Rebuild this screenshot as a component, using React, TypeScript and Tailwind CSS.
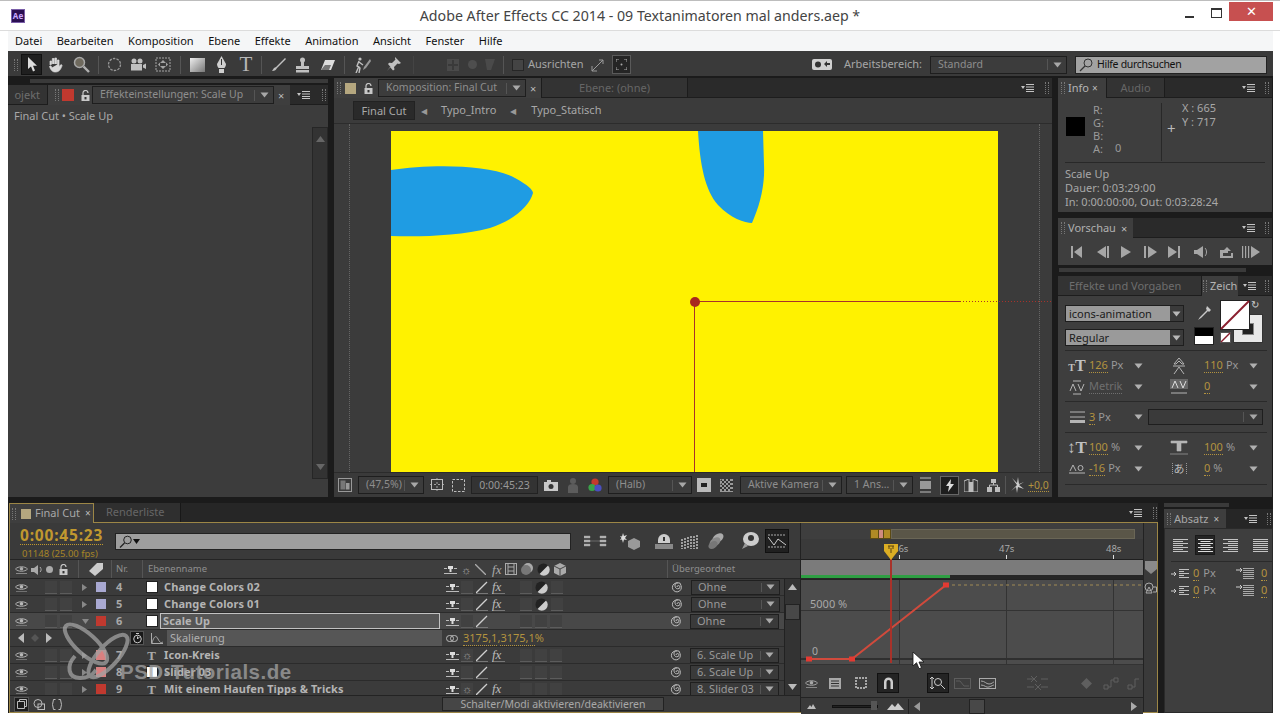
import React from "react";

type SP = { w: number; h: number; vb?: string; cls?: string; children?: React.ReactNode };
const Svg = ({ w, h, vb, cls, children }: SP) => (
  <svg width={w} height={h} viewBox={vb ?? `0 0 ${w} ${h}`} className={cls ?? "shrink-0"}>
    {children}
  </svg>
);

const Grip = () => <div className="w-[4px] h-[12px] shrink-0 border-x border-dotted border-[#777]" />;

const MenuIcon = () => (
  <Svg w={13} h={8}>
    <path d="M0 2h4L2 5z" fill="#c4c4c4" />
    <path d="M5 0.5h8M5 3h8M5 5.5h8M5 7.5h8" stroke="#c4c4c4" strokeWidth="1" />
  </Svg>
);

const Close = ({ cls }: { cls?: string }) => <span className={cls ?? "text-[11px] text-[#bbb] leading-none"}>×</span>;
const Down = ({ c }: { c?: string }) => (
  <Svg w={9} h={6}>
    <path d="M0.5 0.5h8L4.5 5.5z" fill={c ?? "#a8a8a8"} />
  </Svg>
);

const Lock = () => (
  <Svg w={9} h={11}>
    <path d="M2 5V3a2.5 2.5 0 0 1 5 0" stroke="#c8c8c8" strokeWidth="1.2" fill="none" />
    <rect x="0.5" y="5" width="8" height="6" fill="#c8c8c8" />
    <rect x="3.5" y="7" width="2" height="2.4" fill="#333" />
  </Svg>
);

const Eye = ({ c }: { c?: string }) => (
  <Svg w={13} h={9}>
    <path d="M0.5 4C3 1 10 1 12.5 4 10 7 3 7 0.5 4z" fill="none" stroke={c ?? "#b8b8b8"} strokeWidth="1" />
    <circle cx="6.5" cy="3.8" r="1.8" fill={c ?? "#b8b8b8"} />
    <path d="M1 8.5h11" stroke={c ?? "#8a8a8a"} strokeWidth="0.7" />
  </Svg>
);

const Dropdown = ({ text, w, cls }: { text: string; w: string; cls?: string }) => (
  <div className={`${w} ${cls ?? ""} h-[18px] flex items-center shrink-0 bg-[#3c3c3c] border border-[#1e1e1e] text-[10.5px] text-[#8e8e8e]`}>
    <span className="flex-1 pl-[7px] truncate">{text}</span>
    <span className="w-px h-[11px] bg-[#555]" />
    <span className="w-[18px] flex justify-center">
      <Down />
    </span>
  </div>
);

const Box = () => <div className="w-[12px] h-[13px] shrink-0 bg-[#414141] border-b border-[#5c5c5c]" />;

const Gold = ({ children }: { children: React.ReactNode }) => (
  <span className="text-[#b3933f] border-b border-dotted border-[#b3933f] leading-[12px]">{children}</span>
);

const fs = "font-['Noto_Sans',sans-serif]";

function TitleBar() {
  return (
    <div className="h-[31px] shrink-0 flex items-stretch bg-white border-t border-t-[#bdbdbd] border-b border-b-[#dcdcdc]">
      <div className="w-[150px] pl-[11px] pt-[8px]">
        <div className="w-[14px] h-[14px] bg-[#2a0f52] border border-[#7a5ea8] flex items-center justify-center text-[8px] leading-none text-[#c9a8ff] font-bold">
          Ae
        </div>
      </div>
      <div className="flex-1 text-center text-[#444] text-[14.2px] leading-[29px] whitespace-nowrap">
        Adobe After Effects CC 2014 - 09 Textanimatoren mal anders.aep *
      </div>
      <div className="w-[150px] flex justify-end items-start pr-[7px]">
        <div className="w-[9px] h-[2px] bg-[#333] mt-[15px] mr-[17px]" />
        <div className="w-[11px] h-[10px] border border-[#333] border-t-2 mt-[7px] mr-[7px]" />
        <div className="w-[44px] h-[19px] bg-[#c75050] text-white text-center text-[13px] leading-[18px] mt-[1px]">✕</div>
      </div>
    </div>
  );
}

function MenuBar() {
  const items = ["Datei", "Bearbeiten", "Komposition", "Ebene", "Effekte", "Animation", "Ansicht", "Fenster", "Hilfe"];
  return (
    <div className="h-[20px] shrink-0 ml-[8px] mr-[7px] bg-[#f5f6f7] flex items-center gap-[14.5px] pl-[7px] text-[11px] text-[#111]">
      {items.map((t) => (
        <span key={t}>{t}</span>
      ))}
    </div>
  );
}

const Tool = ({ children, w, cls }: { children?: React.ReactNode; w?: string; cls?: string }) => (
  <div className={`${w ?? "w-[24px]"} ${cls ?? ""} h-[20px] shrink-0 flex items-center justify-center`}>{children}</div>
);
const Sep = ({ cls }: { cls?: string }) => <div className={`w-px h-[18px] bg-[#555] shrink-0 ${cls ?? ""}`} />;

function ToolBar() {
  const c = "#c0c0c0";
  return (
    <div className="h-[25px] shrink-0 bg-[#3a3a3a] flex items-center pl-[6px] pt-[2px] text-[11px]">
      <Grip />
      <div className="w-[21px] h-[21px] ml-[3px] bg-[#1f1f1f] border border-[#111] flex items-center justify-center">
        <Svg w={10} h={15}>
          <path d="M1 0v12l3-2.600 2 5 2-.8-2-4.800H10z" fill="#dcdcdc" />
        </Svg>
      </div>
      <Tool cls="ml-[1px]">
        <Svg w={16} h={16}>
          <path d="M3 8V4h1.600v3.500M5.300 7V1.500h1.700V7M7.800 7V1h1.700v6M10.300 7.500V3h1.700v6.500l2-2 1.200 1c-1 2-2 6.500-6.700 6.500-3 0-4.500-1.500-6-5.500l1.200-.8L5 10.500" fill="#d8d8d8" stroke="#d8d8d8" strokeWidth=".7" />
        </Svg>
      </Tool>
      <Tool cls="ml-[2px]">
        <Svg w={17} h={17}>
          <circle cx="6.500" cy="6.500" r="5" fill="#6f6a5e" stroke="#a8a8a8" strokeWidth="1.500" />
          <path d="M10.500 10.500l5.500 5.500" stroke="#b0b0b0" strokeWidth="2.400" />
        </Svg>
      </Tool>
      <Sep cls="ml-[5px]" />
      <Tool cls="ml-[3px]">
        <Svg w={15} h={15}>
          <circle cx="7.500" cy="7.500" r="6" fill="none" stroke="#999" strokeWidth="1.300" strokeDasharray="2.500 1.200" />
        </Svg>
      </Tool>
      <Tool>
        <Svg w={17} h={14}>
          <circle cx="4" cy="3" r="2.500" fill={c} />
          <circle cx="10" cy="3" r="2.500" fill={c} />
          <rect x="1" y="6" width="11" height="6.500" fill={c} />
          <path d="M13 7l3-1.500v5.500L13 9.500z" fill={c} />
        </Svg>
      </Tool>
      <Tool cls="ml-[1px]">
        <Svg w={16} h={15}>
          <rect x="1" y="1" width="14" height="13" fill="none" stroke="#a5a5a5" strokeDasharray="2 1" />
          <path d="M8 3l3 3H5zM8 12L5 9h6zM3 7.500l2-2v4zM13 7.500l-2-2v4z" fill="#a5a5a5" />
        </Svg>
      </Tool>
      <Sep cls="ml-[5px]" />
      <Tool cls="ml-[4px]">
        <Svg w={15} h={14}>
          <defs>
            <linearGradient id="rg" x1="0" y1="0" x2="1" y2="1">
              <stop offset="0" stopColor="#eee" />
              <stop offset="1" stopColor="#777" />
            </linearGradient>
          </defs>
          <rect width="15" height="14" fill="url(#rg)" />
        </Svg>
      </Tool>
      <Tool>
        <Svg w={11} h={18}>
          <path d="M5.500 0L10 8c0 2-1 3-1.500 4h-6C2 11 1 10 1 8z" fill="#d0d0d0" />
          <rect x="3" y="13" width="5" height="4" fill="#d0d0d0" />
          <path d="M5.500 3v6" stroke="#333" />
        </Svg>
      </Tool>
      <Tool cls="ml-[1px]">
        <span className="font-['Liberation_Serif',serif] text-[21px] leading-none text-[#b8b8b8]">T</span>
      </Tool>
      <Sep cls="ml-[3px]" />
      <Tool cls="ml-[4px]">
        <Svg w={15} h={15}>
          <path d="M14 1L5 10l-2 1-2 3c3 0 4-1 5-3l9-9z" fill={c} />
        </Svg>
      </Tool>
      <Tool>
        <Svg w={15} h={16}>
          <circle cx="7.500" cy="3" r="2.500" fill={c} />
          <rect x="6" y="5" width="3" height="4" fill={c} />
          <rect x="1" y="9" width="13" height="3" fill={c} />
          <rect x="1" y="13" width="13" height="2.500" fill={c} />
        </Svg>
      </Tool>
      <Tool cls="ml-[2px]">
        <Svg w={16} h={12}>
          <path d="M5 1h10L11 11H1z" fill="#ddd" />
          <path d="M1 11l4-5h6l-2 5z" fill="#777" />
        </Svg>
      </Tool>
      <Sep cls="ml-[4px]" />
      <Tool cls="ml-[5px]">
        <Svg w={17} h={16}>
          <circle cx="6" cy="2" r="1.600" fill={c} />
          <path d="M5 4l-2 5 3 2-1 5M5 5l4 3M5 9l-3 7" stroke={c} strokeWidth="1.400" fill="none" />
          <path d="M16 2L10 10l-1 3 3-2 5-7z" fill="#999" />
        </Svg>
      </Tool>
      <Tool cls="ml-[7px]">
        <Svg w={15} h={15}>
          <path d="M9 0l6 6-2 1-1.500-.5L8 10l.5 2.500-1.500 1L4 10l-3 4 3.500-4-2.500-3 1.200-1.200L6 6l3.500-3.500L9 1.500z" fill={c} />
        </Svg>
      </Tool>
      <Sep cls="ml-[8px] opacity-40" />
      <div className="flex items-center ml-[33px] gap-[8px] opacity-60">
        <Svg w={12} h={12}>
          <rect width="12" height="12" fill="#555" />
          <path d="M6 1v10M1 6h10" stroke="#3a3a3a" strokeWidth="2" />
        </Svg>
        <div className="w-[9px] h-[9px] rounded-full bg-[#5c5c5c] ml-[1px]" />
        <Svg w={10} h={11}>
          <path d="M0 0h10L6 11H2z" fill="#555" />
        </Svg>
      </div>
      <Sep cls="ml-[8px]" />
      <div className="w-[12px] h-[12px] ml-[8px] border border-[#262626] bg-[#444] shrink-0" />
      <span className="ml-[4px] text-[#a6a6a6]">Ausrichten</span>
      <Tool cls="ml-[6px]" w="w-[16px]">
        <Svg w={14} h={14}>
          <path d="M1 13L12 2M8 2h4v4M1 8v5h5" stroke="#9a9a9a" strokeWidth="1" fill="none" />
        </Svg>
      </Tool>
      <div className="ml-[6px] w-[19px] h-[19px] bg-[#252525] border border-[#5a5a5a] flex items-center justify-center shrink-0">
        <Svg w={11} h={11}>
          <path d="M0 3V0h3M8 0h3v3M11 8v3H8M3 11H0V8" stroke="#aaa" fill="none" />
          <circle cx="5.500" cy="5.500" r="1" fill="#aaa" />
        </Svg>
      </div>
      <div className="flex-1" />
      <Svg w={20} h={11}>
        <rect width="20" height="11" rx="2" fill="#d0d0d0" />
        <circle cx="6" cy="5.500" r="3" fill="#333" />
        <path d="M12 5l3-3v2h3v2h-3v2z" fill="#333" />
      </Svg>
      <span className="ml-[12px] text-[#a6a6a6] text-[11px]">Arbeitsbereich:</span>
      <Dropdown text="Standard" w="w-[137px] ml-[8px]" />
      <div className="ml-[8px] mr-[6px] w-[192px] h-[18px] flex items-center bg-[#a2a2a2] border border-[#222] text-[#111] shrink-0">
        <Svg w={14} h={14} cls="ml-[3px] shrink-0">
          <circle cx="9" cy="5" r="4" fill="none" stroke="#333" />
          <path d="M6 8l-5 5" stroke="#333" strokeWidth="1.300" />
        </Svg>
        <span className="ml-[4px] text-[10.5px] tracking-[-0.3px]">Hilfe durchsuchen</span>
      </div>
    </div>
  );
}

function EffectsPanel() {
  return (
    <div className="w-[320px] shrink-0 flex flex-col">
      <div className="h-[7px] shrink-0 pt-[1px] pl-[22px]">
        <div className="h-[4px] bg-[#3a3a3a]" />
      </div>
      <div className="h-[20px] shrink-0 flex items-stretch bg-[#2a2a2a] text-[11px] border-b border-[#1d1d1d]">
        <div className="w-[40px] bg-[#333] text-[#6e6e6e] leading-[19px] border-r border-[#1c1c1c] overflow-hidden text-right pr-[7px]">ojekt</div>
        <div className="w-[242px] bg-[#3e3e3e] flex items-center pl-[7px] -mb-px">
          <Grip />
          <div className="w-[12px] h-[12px] ml-[3px] bg-[#c0392f] shrink-0" />
          <div className="ml-[7px] w-[9px] flex"><Lock /></div>
          <Dropdown text="Effekteinstellungen: Scale Up" w="w-[182px] ml-[2px]" />
          <Close cls="ml-[4px] text-[11px] text-[#bbb] leading-none" />
        </div>
        <div className="flex-1 flex items-center justify-end pr-[2px] gap-[12px]">
          <MenuIcon />
          <Grip />
        </div>
      </div>
      <div className="flex-1 flex flex-col bg-[#3c3c3c] min-h-0">
        <div className="h-[22px] shrink-0 flex items-center pl-[6px] text-[11px] text-[#a8a8a8]">Final Cut • Scale Up</div>
        <div className="flex-1 flex justify-end min-h-0">
          <div className="w-[16px] bg-[#333] flex flex-col items-center justify-between py-[8px] border border-[#262626]">
            <Svg w={9} h={6}>
              <path d="M0 6h9L4.500 0z" fill="#666" />
            </Svg>
            <Svg w={9} h={6}>
              <path d="M0 0h9L4.500 6z" fill="#666" />
            </Svg>
          </div>
        </div>
        <div className="h-[18px] shrink-0" />
      </div>
    </div>
  );
}

function CompFooter() {
  const Mini = ({ children, cls }: { children: React.ReactNode; cls?: string }) => <div className={`shrink-0 flex items-center justify-center ${cls ?? ""}`}>{children}</div>;
  const c = "#bdbdbd";
  return (
    <div className="h-[25px] shrink-0 bg-[#3a3a3a] flex items-center pl-[4px] text-[11px] border-t border-[#2b2b2b]">
      <Mini>
        <Svg w={14} h={14}>
          <rect x=".5" y=".5" width="13" height="13" fill="none" stroke="#999" />
          <rect x="2.500" y="2.500" width="5" height="9" fill="#777" />
          <rect x="8" y="5" width="3.500" height="6.500" fill="#999" />
        </Svg>
      </Mini>
      <Dropdown text="(47,5%)" w="w-[66px] ml-[6px]" />
      <Mini cls="ml-[6px]">
        <Svg w={14} h={14}>
          <rect x="1.500" y="1.500" width="11" height="10" fill="none" stroke={c} />
          <path d="M7 0v13M0 6.500h14" stroke={c} strokeWidth=".8" strokeDasharray="2 2" />
        </Svg>
      </Mini>
      <Mini cls="ml-[8px]">
        <Svg w={13} h={13}>
          <rect x=".5" y=".5" width="12" height="12" fill="none" stroke={c} strokeDasharray="2.500 1.500" />
        </Svg>
      </Mini>
      <div className="ml-[6px] w-[67px] h-[18px] bg-[#333] border border-[#222] text-[#999] text-[10.5px] text-center leading-[16px] shrink-0">0:00:45:23</div>
      <Mini cls="ml-[6px]">
        <Svg w={14} h={11}>
          <rect y="2" width="14" height="9" fill="#c8c8c8" />
          <rect x="3" width="4" height="2" fill="#c8c8c8" />
          <circle cx="7" cy="6.500" r="2.500" fill="#333" />
        </Svg>
      </Mini>
      <Mini cls="ml-[10px]">
        <Svg w={10} h={15}>
          <circle cx="5" cy="3" r="3" fill="#5c5c5c" />
          <path d="M0 15V9c0-2 2-3 5-3s5 1 5 3v6z" fill="#5c5c5c" />
        </Svg>
      </Mini>
      <Mini cls="ml-[10px]">
        <Svg w={14} h={15}>
          <circle cx="7" cy="4" r="3.600" fill="#c43a2d" />
          <circle cx="4" cy="9.500" r="3.600" fill="#3aa14a" />
          <circle cx="10" cy="10" r="3.600" fill="#4a4fc0" />
        </Svg>
      </Mini>
      <Dropdown text="(Halb)" w="w-[84px] ml-[6px]" />
      <Mini cls="ml-[5px]">
        <Svg w={14} h={14}>
          <rect width="14" height="14" fill="#bbb" />
          <rect x="4" y="5" width="6" height="4" fill="#222" />
        </Svg>
      </Mini>
      <Mini cls="ml-[9px]">
        <Svg w={13} h={13}>
          <rect width="13" height="13" fill="#999" />
          <path d="M0 2h2V0M4 0v2h2V0M8 0v2h2V0M0 6h2V4M4 4v2h2V4M8 4v2h2V4M2 2h2v2H2zM6 2h2v2H6zM10 2h3v2h-3zM2 6h2v2H2zM6 6h2v2H6zM10 6h3v2h-3zM0 8h2v2H0zM4 8h2v2H4zM8 8h2v2H8zM2 10h2v2H2zM6 10h2v2H6zM10 10h3v2h-3z" fill="#333" />
        </Svg>
      </Mini>
      <Dropdown text="Aktive Kamera" w="w-[102px] ml-[7px]" />
      <Dropdown text="1 Ans..." w="w-[67px] ml-[4px]" />
      <Mini cls="ml-[7px]">
        <Svg w={11} h={16}>
          <path d="M0 1h11M0 15h11" stroke={c} />
          <rect y="4" width="11" height="8" fill="#999" />
        </Svg>
      </Mini>
      <div className="ml-[9px] w-[19px] h-[19px] bg-[#1e1e1e] border border-[#666] flex items-center justify-center shrink-0">
        <Svg w={8} h={13}>
          <path d="M5 0L0 7h3l-1 6 6-8H4.500z" fill="#ddd" />
        </Svg>
      </div>
      <Mini cls="ml-[5px]">
        <Svg w={14} h={13}>
          <path d="M0 2l5-2v13H0zM14 2L9 0v13h5z" fill="none" stroke={c} />
          <rect x="5" y="3" width="4" height="10" fill={c} />
        </Svg>
      </Mini>
      <Mini cls="ml-[9px]">
        <Svg w={13} h={13}>
          <rect x="4" width="5" height="4" fill={c} />
          <rect y="8" width="5" height="5" fill={c} />
          <rect x="8" y="8" width="5" height="5" fill={c} />
          <path d="M6.500 4v2M2.500 8V6h8v2" stroke={c} fill="none" />
        </Svg>
      </Mini>
      <Sep cls="ml-[5px]" />
      <Mini cls="ml-[4px]">
        <Svg w={14} h={16}>
          <path d="M7 8L2 1l5 5 1-6 1 7 5-2-5 3 5 4-6-2-1 6-1-6-5 4z" fill="#ccc" />
        </Svg>
      </Mini>
      <span className="ml-[4px] text-[10.5px] text-[#b3933f] border-b border-dotted border-[#b3933f] leading-[12px] whitespace-nowrap">+0,0</span>
    </div>
  );
}

function CompPanel() {
  return (
    <div className="w-[718px] shrink-0 flex flex-col bg-[#3b3b3b] ml-[6px]">
      <div className="h-[20px] flex items-stretch bg-[#2a2a2a] text-[11px] border-b border-[#1d1d1d]">
        <div className="w-[207px] bg-[#3e3e3e] flex items-center pl-[3px] -mb-px">
          <Grip />
          <div className="w-[11px] h-[11px] ml-[4px] bg-[#b5a77f] shrink-0" />
          <div className="ml-[8px] flex"><Lock /></div>
          <Dropdown text="Komposition: Final Cut" w="w-[148px] ml-[5px]" />
          <Close cls="ml-[4px] text-[11px] text-[#bbb] leading-none" />
        </div>
        <div className="w-[147px] bg-[#333] border-x border-[#1c1c1c] text-[#666] leading-[19px] text-center">Ebene: (ohne)</div>
        <div className="flex-1 flex items-center justify-end pr-[3px] gap-[11px]">
          <MenuIcon />
          <Grip />
        </div>
      </div>
      <div className="h-[25px] shrink-0 flex items-center pl-[19px] text-[11px] text-[#a8a8a8]">
        <div className="w-[62px] h-[19px] bg-[#2a2a2a] border border-[#222] text-center leading-[17px]">Final Cut</div>
        <span className="ml-[6px] text-[#999] text-[8px]">◀</span>
        <span className="ml-[14px]">Typo_Intro</span>
        <span className="ml-[14px] text-[#999] text-[8px]">◀</span>
        <span className="ml-[15px]">Typo_Statisch</span>
      </div>
      <div className="h-[349px] shrink-0 relative bg-[#3b3b3b] pl-[57px] pt-[7px] overflow-hidden border-t border-[#2c2c2c]">
        <div className="w-[607px] h-[342px] bg-[#fff200]" />
        <div className="absolute left-[15px] top-0 bottom-0 border-l border-dotted border-[#666]" />
        <div className="absolute right-[12px] top-0 bottom-0 border-l border-dotted border-[#666]" />
        <svg width="718" height="349" viewBox="334 123 718 349" className="absolute left-0 -top-px">
          <path d="M391 170C430 164 490 164 515 178 528 185 533 190 533 193 530 205 515 220 490 228 460 236 420 237 391 236Z" fill="#1f9ce3" />
          <path d="M698 131C700 165 705 190 718 205 730 218 745 223 752 223 760 205 765 185 764 165L763 131Z" fill="#1f9ce3" />
          <path d="M695 301.500H960" stroke="#a8322a" strokeWidth="1" />
          <path d="M960 301.500H1052" stroke="#a8322a" strokeWidth="1" strokeDasharray="1 2" />
          <path d="M694.500 302V472" stroke="#a8322a" strokeWidth="1" />
          <circle cx="695" cy="302" r="5" fill="#a8281f" />
        </svg>
      </div>
      <CompFooter />
    </div>
  );
}

const PanelHead = ({ children }: { children: React.ReactNode }) => (
  <div className="h-[20px] shrink-0 flex items-stretch bg-[#2a2a2a] text-[11px] border-b border-[#1d1d1d]">
    {children}
    <div className="flex-1 flex items-center justify-end pr-[3px] gap-[10px]">
      <MenuIcon />
      <Grip />
    </div>
  </div>
);

function InfoPanel() {
  return (
    <div className="h-[134px] shrink-0 flex flex-col bg-[#3e3e3e] text-[11px] text-[#a8a8a8]">
      <PanelHead>
        <div className="w-[48px] bg-[#3e3e3e] flex items-center pl-[3px] -mb-px">
          <Grip />
          <span className="ml-[3px] text-[#b5b5b5]">Info</span>
          <Close cls="ml-[3px] text-[10px] text-[#bbb]" />
        </div>
        <div className="w-[59px] bg-[#333] border-x border-[#1c1c1c] text-[#666] text-center leading-[19px]">Audio</div>
      </PanelHead>
      <div className="h-[59px] mt-[5px] flex shrink-0 leading-[13px]">
        <div className="w-[8px] shrink-0" />
        <div className="w-[19px] h-[19px] mt-[14px] bg-black shrink-0" />
        <div className="w-[30px] pl-[8px] text-[#9a9a9a] shrink-0">
          <div>R:</div>
          <div>G:</div>
          <div>B:</div>
          <div>A:</div>
        </div>
        <div className="w-[46px] pt-[38px] text-[#9a9a9a] shrink-0">0</div>
        <div className="w-px h-[58px] bg-[#282828] shrink-0" />
        <div className="ml-[5px] w-[14px] pt-[18px] text-[#bbb] text-[15px] leading-none shrink-0">+</div>
        <div className="text-[#a8a8a8] -mt-[2px] ml-[1px]">
          <div>X : 665</div>
          <div className="mt-[1px]">Y : 717</div>
        </div>
      </div>
      <div className="h-px mx-[7px] bg-[#282828]" />
      <div className="pl-[7px] pt-[4px] leading-[14px] text-[#a8a8a8] whitespace-nowrap">
        <div>Scale Up</div>
        <div>Dauer: 0:03:29:00</div>
        <div>In: 0:00:00:00, Out: 0:03:28:24</div>
      </div>
    </div>
  );
}

function PreviewPanel() {
  const f = "#a6a6a6";
  return (
    <div className="h-[47px] mt-[6px] shrink-0 flex flex-col bg-[#3e3e3e] text-[11px]">
      <PanelHead>
        <div className="w-[75px] bg-[#3e3e3e] flex items-center pl-[3px] -mb-px">
          <Grip />
          <span className="ml-[3px] text-[#b0b0b0]">Vorschau</span>
          <Close cls="ml-[5px] text-[11px] text-[#bbb] leading-none" />
        </div>
      </PanelHead>
      <div className="flex-1 flex items-center pl-[12px]">
        <Svg w={202} h={14}>
          <path d="M1 1h2v12H1zM12 1v12L4 7z" fill={f} />
          <path d="M27 7l9-6v12zM37 1h2v12h-2z" fill={f} />
          <path d="M51 1l10 6-10 6z" fill={f} />
          <path d="M74 1h2v12h-2zM78 1l9 6-9 6z" fill={f} />
          <path d="M98 1l9 6-9 6zM108 1h2v12h-2z" fill={f} />
          <path d="M124 5h3l6-4v12l-6-4h-3z" fill={f} />
          <path d="M135 3c2 2 2 6 0 8" stroke={f} fill="none" />
          <path d="M150 5h4l3-3 4 4h-3v2h-8zM150 8h3v3h8V8h2v5h-13z" fill={f} />
          <path d="M172 1h1.200v12H172zM175 1h1.200v12H175zM178 1h1.200v12H178zM181 1l9 6-9 6z" fill={f} />
        </Svg>
      </div>
    </div>
  );
}

function CharPanel() {
  const Row = ({ icon, val, unit, muted, second }: { icon: React.ReactNode; val: string; unit?: string; muted?: boolean; second?: boolean }) => (
    <div className="flex items-center h-[21px]">
      <div className="w-[24px] flex justify-center shrink-0">{icon}</div>
      <span className={`${second ? "ml-[13px]" : "ml-0"} w-[45px] shrink-0 whitespace-nowrap`}>
        {muted ? <span className="text-[#6f6f6f] border-b border-dotted border-[#6f6f6f] leading-[12px]">{val}</span> : <Gold>{val}</Gold>}
        {unit ? <span className="ml-[3px] text-[#999]">{unit}</span> : null}
      </span>
      <Down c="#b0b0b0" />
    </div>
  );
  const g = "#b5b5b5";
  return (
    <div className="flex-1 flex flex-col bg-[#3e3e3e] text-[11px] mt-[4px] min-h-0">
      <div className="h-[20px] shrink-0 flex items-stretch bg-[#2a2a2a] border-b border-[#1d1d1d]">
        <div className="w-[144px] bg-[#333] border-r border-[#1c1c1c] text-[#6e6e6e] pl-[11px] leading-[19px] whitespace-nowrap">Effekte und Vorgaben</div>
        <div className="w-[36px] bg-[#3e3e3e] flex items-center pl-[1px] -mb-px overflow-hidden">
          <Grip />
          <span className="ml-[3px] text-[#b5b5b5]">Zeich</span>
        </div>
        <div className="flex-1 flex items-center justify-end pr-[3px] gap-[9px]">
          <MenuIcon />
          <Grip />
        </div>
      </div>
      <div className="flex-1 pl-[7px] pr-[5px] pt-[9px] min-h-0 overflow-hidden">
        <div className="flex items-start h-[47px]">
          <div className="w-[119px] flex flex-col gap-[7px]">
            {["icons-animation", "Regular"].map((t) => (
              <div key={t} className="h-[17px] flex border border-[#1e1e1e] bg-[#3a3a3a]">
                <div className="w-[104px] bg-[#9a9a9a] text-[#1a1a1a] pl-[3px] leading-[15px]">{t}</div>
                <div className="flex-1 flex items-center justify-center"><Down c="#b8b8b8" /></div>
              </div>
            ))}
          </div>
          <div className="ml-[10px] w-[20px] flex flex-col items-center">
            <Svg w={15} h={16}>
              <path d="M10 1l4 4-2 2-1-1-7 7-3 2 2-3 7-7-1-1z" fill="#c8c8c8" />
            </Svg>
            <div className="w-[20px] h-[18px] mt-[6px] border border-[#222] bg-white flex flex-col">
              <div className="h-[8px] bg-black" />
            </div>
          </div>
          <div className="ml-[6px] relative w-[46px] h-[44px] -mt-[5px]">
            <div className="absolute left-[13px] top-[14px] w-[30px] h-[29px] bg-[#e8e8e8] border border-[#333] flex items-center justify-center">
              <div className="w-[12px] h-[12px] bg-[#222] border border-[#888]" />
            </div>
            <svg width="30" height="30" className="absolute left-0 top-0">
              <rect x=".5" y=".5" width="29" height="29" fill="#fff" stroke="#222" />
              <path d="M1 29L29 1" stroke="#8a1f2f" strokeWidth="2" />
            </svg>
            <svg width="11" height="11" className="absolute left-0 top-[32px]">
              <rect x=".5" y=".5" width="10" height="10" fill="#fff" stroke="#555" />
              <path d="M1 10L10 1" stroke="#8a1f2f" strokeWidth="1.500" />
            </svg>
            <span className="absolute left-[31px] -top-[1px] text-[10px] leading-none text-[#ccc]">↻</span>
          </div>
        </div>
        <div className="h-px bg-[#2a2a2a] mt-[-2px]" />
        <div className="grid grid-cols-[102px_100px] mt-[4px]">
          <Row val="126" unit="Px" icon={<span className="font-['Liberation_Serif',serif] font-bold text-[16px] leading-none text-[#c0c0c0]"><span className="text-[10px]">T</span>T</span>} />
          <Row second val="110" unit="Px" icon={
            <Svg w={12} h={17}>
              <path d="M1 7l5-6 5 6H9L6 4 3 7zM0 9h12M1 17l5-7 5 7" stroke={g} fill="none" />
            </Svg>
          } />
          <Row muted val="Metrik" icon={
            <Svg w={16} h={16}>
              <path d="M1 12l3-7 3 7M9 5l3 7 3-7M4 2h8M4 15h8" stroke={g} fill="none" />
            </Svg>
          } />
          <Row second val="0" icon={
            <Svg w={18} h={16}>
              <rect width="18" height="10" fill="#666" />
              <path d="M2 9l3-7 3 7M10 2l3 7 3-7" stroke="#ddd" fill="none" />
              <path d="M1 14h16" stroke={g} />
            </Svg>
          } />
        </div>
        <div className="h-px bg-[#2a2a2a] mt-[4px]" />
        <div className="flex items-center h-[30px]">
          <div className="w-[24px] flex justify-center">
            <Svg w={15} h={12}>
              <path d="M0 1h15M0 6h15" stroke={g} />
              <rect y="9" width="15" height="3" fill={g} />
            </Svg>
          </div>
          <span className="w-[45px]">
            <Gold>3</Gold>
            <span className="ml-[3px] text-[#999]">Px</span>
          </span>
          <Down c="#b0b0b0" />
          <div className="ml-[5px] w-[115px] h-[16px] bg-[#3a3a3a] border border-[#1e1e1e] flex items-center justify-end">
            <span className="w-px h-[10px] bg-[#555]" />
            <span className="w-[18px] flex justify-center"><Down /></span>
          </div>
        </div>
        <div className="h-px bg-[#2a2a2a]" />
        <div className="grid grid-cols-[102px_100px] mt-[4px]">
          <Row val="100" unit="%" icon={<span className="font-['Liberation_Serif',serif] font-bold text-[17px] leading-none text-[#c0c0c0]">↕T</span>} />
          <Row second val="100" unit="%" icon={
            <Svg w={18} h={16}>
              <path d="M1 1h16v2H11v8H7V3H1zM0 14h18" fill={g} stroke={g} strokeWidth=".6" />
            </Svg>
          } />
          <Row val="-16" unit="Px" icon={
            <Svg w={16} h={14}>
              <path d="M1 9l3-6 3 6M9 6a2.500 2.500 0 1 0 5 0 2.500 2.500 0 1 0-5 0M0 11h16" stroke={g} fill="none" />
            </Svg>
          } />
          <Row second val="0" unit="%" icon={<span className="font-['Noto_Sans_CJK_JP',sans-serif] text-[11px] leading-none text-[#bbb] border-x border-dotted border-[#999] px-[1px]">あ</span>} />
        </div>
        <div className="h-px bg-[#2a2a2a] mt-[5px]" />
      </div>
    </div>
  );
}

function TopRow() {
  return (
    <div className="h-[419px] shrink-0 flex mt-[2px]">
      <EffectsPanel />
      <CompPanel />
      <div className="w-[214px] shrink-0 ml-[6px] flex flex-col">
        <InfoPanel />
        <PreviewPanel />
        <div className="h-[4px] mt-[3px] w-[187px] ml-[1px] bg-[#3a3a3a] shrink-0" />
        <CharPanel />
      </div>
    </div>
  );
}

const Shy = () => (
  <Svg w={13} h={9}>
    <path d="M0 3.500h3M10 3.500h3M0 8.500h13" stroke="#bbb" />
    <path d="M4 1h5v3H7.500v3h-2V4H4z" fill="#ddd" />
  </Svg>
);
const Slash = () => (
  <Svg w={12} h={13}>
    <path d="M0 12L11 1" stroke="#cfcfcf" strokeWidth="1.300" />
    <path d="M0 12.500h12" stroke="#777" />
  </Svg>
);
const Fx = () => <span className="font-['Liberation_Serif',serif] italic text-[13px] leading-[13px] text-[#bbb] w-[13px] border-b border-[#777] shrink-0">fx</span>;
const Blend = () => (
  <Svg w={13} h={13}>
    <circle cx="6.500" cy="6.500" r="6" fill="#222" />
    <path d="M11 2.500A6 6 0 0 1 2.500 11z" fill="#ccc" />
  </Svg>
);
const Spiral = () => (
  <Svg w={12} h={12}>
    <path d="M6 6a1.500 1.500 0 1 1 2 1.500 3 3 0 1 1 2-3 4.500 4.500 0 1 1-3-2.500" stroke="#bbb" fill="none" />
  </Svg>
);
const TIcon = () => <span className="font-['Liberation_Serif',serif] font-bold text-[13px] leading-none text-[#aaa] w-[13px] text-center">T</span>;

type L = { n: number; c: string; src: "solid" | "t"; name: string; sun?: boolean; fx?: boolean; blend?: boolean; parent: string; open?: boolean; sel?: boolean };
const layers: L[] = [
  { n: 4, c: "#a9a9d2", src: "solid", name: "Change Colors 02", fx: true, blend: true, parent: "Ohne" },
  { n: 5, c: "#a9a9d2", src: "solid", name: "Change Colors 01", fx: true, blend: true, parent: "Ohne" },
  { n: 6, c: "#c0392f", src: "solid", name: "Scale Up", parent: "Ohne", open: true, sel: true },
  { n: 7, c: "#d98080", src: "t", name: "Icon-Kreis", sun: true, fx: true, parent: "6. Scale Up" },
  { n: 8, c: "#d98080", src: "solid", name: "Slider 03", parent: "6. Scale Up" },
  { n: 9, c: "#c0392f", src: "t", name: "Mit einem Haufen Tipps & Tricks", sun: true, fx: true, parent: "8. Slider 03" },
];

function Row({ l }: { l: L }) {
  return (
    <div className={`h-[17px] flex items-center border-b border-[#2b2b2b] ${l.sel ? "bg-[#484848]" : "bg-[#3b3b3b]"}`}>
      <div className="w-[22px] pl-[5px] shrink-0 flex"><Eye /></div>
      <div className="ml-[13px] flex gap-[3px]">
        <Box />
        <Box />
      </div>
      <div className="ml-[10px] w-[7px] shrink-0 flex">
        {l.open ? (
          <Svg w={7} h={5}>
            <path d="M0 0h7L3.500 5z" fill="#888" />
          </Svg>
        ) : (
          <Svg w={5} h={7}>
            <path d="M0 0l5 3.500L0 7z" fill="#888" />
          </Svg>
        )}
      </div>
      <div className="ml-[7px] w-[10px] h-[10px] shrink-0 flex">
        <Svg w={10} h={10}>
          <rect width="10" height="10" fill={l.c} />
        </Svg>
      </div>
      <div className="ml-[10px] w-[29px] shrink-0 font-bold text-[11px] text-[#a8a8a8]">{l.n}</div>
      <div className="w-[13px] h-[13px] shrink-0 flex items-center justify-center">
        {l.src === "solid" ? <div className="w-[12px] h-[12px] bg-white border border-[#222]" /> : <TIcon />}
      </div>
      <div className="ml-[3px] w-[279px] shrink-0 h-[16px]">
        <div className={`h-[16px] pl-[2px] font-bold text-[11px] leading-[14px] text-[#b4b4b4] whitespace-nowrap tracking-[0.1px] border ${l.sel ? "bg-[#555] border-[#c2c2c2] -ml-[1px]" : "border-transparent"}`}>{l.name}</div>
      </div>
      <div className="ml-[6px] w-[13px] shrink-0 flex"><Shy /></div>
      <div className="ml-[2px] w-[12px] h-[13px] shrink-0 flex items-center justify-center bg-[#414141] border-b border-[#5c5c5c]">
        {l.sun ? <span className="text-[11px] leading-none text-[#999]">☼</span> : null}
      </div>
      <div className="ml-[3px] flex shrink-0"><Slash /></div>
      <div className="ml-[4px] w-[13px] flex shrink-0">{l.fx ? <Fx /> : null}</div>
      <div className="ml-[15px] flex gap-[3px] shrink-0 items-center">
        <Box />
        {l.blend ? <Blend /> : <Box />}
        <Box />
      </div>
      <div className="ml-[108px] flex shrink-0"><Spiral /></div>
      <div className="ml-[8px] w-[89px] h-[15px] shrink-0 flex items-center bg-[#3a3a3a] border border-[#1f1f1f] text-[11px] text-[#999]">
        <span className="flex-1 pl-[6px] truncate">{l.parent}</span>
        <span className="w-px h-[9px] bg-[#555]" />
        <span className="w-[17px] flex justify-center"><Down c="#aaa" /></span>
      </div>
    </div>
  );
}

function SubRow() {
  return (
    <div className="h-[17px] flex items-center border-b border-[#2b2b2b] bg-[#3b3b3b]">
      <div className="w-[120px] pl-[8px] flex items-center gap-[7px] shrink-0">
        <Svg w={6} h={10}>
          <path d="M6 0v10L0 5z" fill="#bbb" />
        </Svg>
        <Svg w={8} h={8}>
          <path d="M4 0l4 4-4 4-4-4z" fill="#555" />
        </Svg>
        <Svg w={6} h={10}>
          <path d="M0 0v10l6-5z" fill="#bbb" />
        </Svg>
      </div>
      <div className="w-[14px] h-[14px] shrink-0 bg-[#181818] border border-[#555] flex items-center justify-center">
        <Svg w={9} h={11}>
          <circle cx="4.500" cy="6" r="3.800" fill="none" stroke="#ccc" />
          <path d="M3 .5h3M4.500 3.500V6L6.500 4" stroke="#ccc" fill="none" />
        </Svg>
      </div>
      <div className="ml-[7px] flex shrink-0">
        <Svg w={12} h={11}>
          <path d="M.5 0v10.500H12M1 10c2-7 4-8 6-4s3 4 5 3" stroke="#aaa" fill="none" />
        </Svg>
      </div>
      <div className="ml-[4px] w-[275px] h-[16px] bg-[#565656] text-[11px] text-[#b0b0b0] pl-[3px] leading-[15px] shrink-0">Skalierung</div>
      <div className="ml-[4px] w-[17px] shrink-0 flex">
        <Svg w={12} h={7}>
          <rect x=".5" y=".5" width="7" height="6" rx="3" fill="none" stroke="#bbb" />
          <rect x="4.500" y=".5" width="7" height="6" rx="3" fill="none" stroke="#bbb" />
        </Svg>
      </div>
      <span className="text-[11px] text-[#b3933f] whitespace-nowrap">
        <span className="border-b border-dotted border-[#b3933f]">3175,1</span>,<span className="border-b border-dotted border-[#b3933f]">3175,1</span>%
      </span>
    </div>
  );
}

function TimelineLeft() {
  const c = "#b0b0b0";
  return (
    <div className="w-[790px] shrink-0 flex flex-col">
      <div className="h-[36px] shrink-0 flex items-center">
        <div className="w-[105px] pl-[10px] shrink-0">
          <div className="inline-block font-bold text-[15.5px] leading-[17px] text-[#c0982f] tracking-[0.8px] border-b border-dotted border-[#c0982f]">0:00:45:23</div>
          <div className="text-[9.5px] leading-[13px] text-[#a78527] ml-[2px] whitespace-nowrap">01148 (25.00 fps)</div>
        </div>
        <div className="w-[456px] h-[17px] bg-[#9e9e9e] border border-[#222] flex items-center shrink-0">
          <Svg w={13} h={13} cls="ml-[3px] shrink-0">
            <circle cx="8.500" cy="5" r="3.800" fill="none" stroke="#222" />
            <path d="M5.500 8L1 12.500" stroke="#222" strokeWidth="1.300" />
          </Svg>
          <Svg w={7} h={5} cls="ml-[1px]">
            <path d="M0 0h7L3.500 5z" fill="#111" />
          </Svg>
        </div>
        <div className="ml-[13px] flex items-center">
          <Svg w={24} h={12}>
            <path d="M0 1h6v2H0zM0 5h6v2H0zM0 9h6v2H0zM6 6h10M16 1h6v2h-6zM16 5h6v2h-6zM16 9h6v2h-6z" fill={c} stroke={c} strokeWidth=".4" />
          </Svg>
          <Svg w={20} h={17} cls="ml-[12px]">
            <path d="M3 0l1 3 3-1-2 3 2 2-3-.5L3 10 2 6.500 0 7l1.500-2L0 3l2 .5z" fill="#ddd" />
            <path d="M14 5l6 3v6l-6 3-6-3V8z" fill="#999" />
          </Svg>
          <Svg w={18} h={15} cls="ml-[15px]">
            <path d="M3 9V6a6 6 0 0 1 12 0v3z" fill="#ccc" />
            <rect x="8" y="3" width="2" height="4" fill="#333" />
            <rect y="10" width="18" height="5" fill="#888" />
          </Svg>
          <Svg w={18} h={15} cls="ml-[7px]">
            <path d="M2 5v10M5 4v11M8 3v12M11 2v13M14 2v13M17 1v14" stroke="#aaa" strokeWidth="1.800" strokeDasharray="2 1" />
          </Svg>
          <Svg w={18} h={17} cls="ml-[9px]">
            <ellipse cx="11" cy="5" rx="6" ry="4" transform="rotate(-35 11 5)" fill="#aaa" />
            <ellipse cx="8" cy="9" rx="6" ry="4" transform="rotate(-35 8 9)" fill="#888" />
            <ellipse cx="6" cy="12" rx="5" ry="3.500" transform="rotate(-35 6 12)" fill="#777" />
          </Svg>
          <Svg w={20} h={18} cls="ml-[14px]">
            <ellipse cx="12" cy="7" rx="8" ry="7" fill="#ccc" />
            <circle cx="12" cy="6" r="3" fill="#333" />
            <path d="M3 17l3-6 3 3z" fill="#999" />
          </Svg>
          <div className="ml-[6px] w-[24px] h-[24px] bg-[#202020] border border-[#111] flex items-center justify-center">
            <Svg w={18} h={14}>
              <path d="M0 1h18M0 13h18" stroke="#aaa" strokeDasharray="2 1" />
              <path d="M0 3l6 8 4-6 8 6" stroke="#ccc" fill="none" />
            </Svg>
          </div>
        </div>
      </div>
      <div className="h-[20px] shrink-0 flex items-center bg-[#3e3e3e] border-y border-[#242424] text-[9.5px] text-[#8f8f8f]">
        <div className="pl-[5px] flex items-center gap-[3px] shrink-0 w-[68px]">
          <Eye c="#aaa" />
          <Svg w={12} h={11}>
            <path d="M0 4h3l4-3v10L3 8H0z" fill="#aaa" />
            <path d="M9 3c1.500 1.500 1.500 4 0 5" stroke="#aaa" fill="none" />
          </Svg>
          <div className="w-[7px] h-[7px] rounded-full bg-[#aaa]" />
          <div className="ml-[3px]"><Lock /></div>
        </div>
        <Sep cls="h-[12px]" />
        <div className="w-[30px] flex justify-center shrink-0 ml-[2px]">
          <Svg w={14} h={13}>
            <path d="M0 8l8-8h6v6l-8 7z" fill="#ccc" />
          </Svg>
        </div>
        <Sep cls="h-[12px]" />
        <div className="w-[30px] pl-[4px] shrink-0">Nr.</div>
        <Sep cls="h-[12px]" />
        <div className="w-[298px] pl-[5px] shrink-0">Ebenenname</div>
        <div className="flex items-center gap-[4px] shrink-0 w-[122px] pl-[3px]">
          <Shy />
          <span className="text-[#aaa] text-[11px] leading-none">☼</span>
          <Svg w={11} h={11}>
            <path d="M0 0l11 11" stroke="#aaa" strokeWidth="1.300" />
          </Svg>
          <span className="font-['Liberation_Serif',serif] italic text-[13px] leading-none text-[#aaa] ml-[2px]">fx</span>
          <Svg w={12} h={12}>
            <rect x=".5" y=".5" width="11" height="11" fill="none" stroke="#aaa" />
            <path d="M3 0v12M9 0v12M3 4h6M3 8h6" stroke="#aaa" />
          </Svg>
          <Svg w={12} h={12}>
            <circle cx="7" cy="5" r="5" fill="#aaa" />
            <circle cx="5" cy="7" r="5" fill="#777" />
          </Svg>
          <Blend />
          <Svg w={12} h={13}>
            <path d="M6 0l6 3v7l-6 3-6-3V3z" fill="#aaa" />
            <path d="M0 3l6 3 6-3M6 6v7" stroke="#444" fill="none" />
          </Svg>
        </div>
        <Sep cls="h-[12px] ml-[104px]" />
        <div className="pl-[4px] whitespace-nowrap">Übergeordnet</div>
      </div>
      <div className="flex-1 flex min-h-0">
        <div className="w-[774px] shrink-0 flex flex-col">
          {layers.slice(0, 3).map((l) => (
            <Row key={l.n} l={l} />
          ))}
          <SubRow />
          {layers.slice(3).map((l) => (
            <Row key={l.n} l={l} />
          ))}
        </div>
        <div className="w-[16px] shrink-0 flex flex-col items-center justify-between bg-[#333] py-[5px] border-l border-[#222] relative">
          <Svg w={9} h={6}>
            <path d="M0 6h9L4.500 0z" fill="#bbb" />
          </Svg>
          <div className="absolute left-0 top-[25px] w-[15px] h-[16px] bg-[#484848] border border-[#222]" />
          <Svg w={9} h={6}>
            <path d="M0 0h9L4.500 6z" fill="#bbb" />
          </Svg>
        </div>
      </div>
      <div className="h-[17px] shrink-0 flex items-center bg-[#3a3a3a] border-t border-[#232323]">
        <div className="w-[15px] h-[15px] ml-[4px] bg-[#1c1c1c] border border-[#555] flex items-center justify-center shrink-0">
          <Svg w={10} h={10}>
            <path d="M2.500 2.500V.5h7v7h-2M.5 2.500h7v7h-7z" stroke="#bbb" fill="none" />
          </Svg>
        </div>
        <Svg w={12} h={11} cls="ml-[4px] shrink-0">
          <circle cx="5" cy="4.500" r="4" fill="none" stroke="#bbb" />
          <rect x="5" y="5" width="6.500" height="5.500" fill="none" stroke="#bbb" />
        </Svg>
        <Svg w={10} h={11} cls="ml-[7px] shrink-0">
          <path d="M3.500 .5h-2l-1 5 1 5h2M6.500 .5h2l1 5-1 5h-2" stroke="#bbb" fill="none" />
        </Svg>
        <div className="ml-[380px] w-[222px] h-[14px] bg-[#464646] border border-[#222] text-center text-[10.5px] leading-[12px] text-[#a8a8a8] whitespace-nowrap shrink-0">Schalter/Modi aktivieren/deaktivieren</div>
      </div>
    </div>
  );
}

function GraphEditor() {
  const c = "#a8a8a8";
  return (
    <div className="w-[343px] shrink-0 flex flex-col relative bg-[#3a3a3a] border-l border-[#222]">
      <div className="h-[16px] shrink-0 pt-[6px] bg-[#3e3e3e] flex">
        <div className="ml-[69px] w-[21px] h-[10px] bg-[#b08a25] border border-[#5c4a14] flex justify-center">
          <div className="w-[6px] h-full bg-[#d08a80] border-x border-[#5c4a14]" />
        </div>
        <div className="w-[244px] h-[10px] bg-[#5a5648] border border-[#6a6656]" />
      </div>
      <div className="h-[20px] shrink-0 relative bg-[#3a3a3a] text-[9.5px] text-[#a8a8a8]">
        <span className="absolute left-[92px] top-[3px]">46s</span>
        <span className="absolute left-[198px] top-[3px]">47s</span>
        <span className="absolute left-[305px] top-[3px]">48s</span>
        <div className="absolute left-[98px] bottom-0 w-px h-[4px] bg-[#ddd]" />
        <div className="absolute left-[205px] bottom-0 w-px h-[4px] bg-[#ddd]" />
        <div className="absolute left-[312px] bottom-0 w-px h-[4px] bg-[#ddd]" />
      </div>
      <div className="h-[16px] shrink-0 bg-[#7b7b7b] border-t border-[#1f1f1f]" />
      <div className="h-[4px] shrink-0 bg-[#262626] flex">
        <div className="w-[149px] h-[3px] bg-[#2e9e43]" />
      </div>
      <div className="h-[85px] shrink-0 relative bg-[#4c4c4c] border-t border-[#222] overflow-hidden text-[11px] text-[#a8a8a8]">
        <svg width="343" height="85" viewBox="801 578 343 85" className="absolute left-0 -top-px">
          <path d="M899.500 578V663M1006.500 578V663M1113.500 578V663M800 609.500H1143" stroke="#333" />
          <path d="M800 658H1143" stroke="#2f2f2f" strokeWidth="2" />
          <path d="M946 584H1143" stroke="#a08a55" strokeWidth="1.200" strokeDasharray="3 3" />
          <path d="M809 658H852L946 584" stroke="#d14a3c" strokeWidth="2" fill="none" />
          <rect x="806" y="655.500" width="6" height="5" fill="#e33a32" />
          <rect x="849" y="655.500" width="6" height="5" fill="#e33a32" />
          <rect x="943" y="581.500" width="6" height="5" fill="#e33a32" />
        </svg>
        <span className="absolute left-[9px] top-[16px]">5000 %</span>
        <span className="absolute left-[11px] top-[64px] text-[10.5px]">0</span>
      </div>
      <div className="absolute left-[89px] top-[27px] w-[2px] h-[113px] bg-[#a8322a]" />
      <svg width="14" height="17" className="absolute left-[83px] top-[20px]">
        <path d="M0 1h14v7l-7 9-7-9z" fill="#dcae24" />
        <path d="M4 3h6M5 3v3M9 3v3M7 5v5" stroke="#5a4410" />
      </svg>
      <div className="h-[33px] shrink-0 flex items-center pl-[4px] pt-[4px] bg-[#3e3e3e] border-t border-[#333]">
        <Eye c={c} />
        <Svg w={12} h={11} cls="ml-[11px] shrink-0">
          <rect width="12" height="11" fill={c} />
          <path d="M2 3h8M2 5.500h8M2 8h8" stroke="#333" />
        </Svg>
        <Svg w={12} h={12} cls="ml-[14px] shrink-0">
          <rect x="1" y="1" width="10" height="10" fill="none" stroke={c} strokeWidth="2" strokeDasharray="2 1" />
        </Svg>
        <div className="ml-[10px] w-[22px] h-[20px] bg-[#242424] border border-[#111] flex items-center justify-center shrink-0">
          <Svg w={11} h={12}>
            <path d="M1 12V5a4.500 4.500 0 0 1 9 0v7H7.500V5a2 2 0 0 0-4 0v7z" fill="#ccc" />
          </Svg>
        </div>
        <div className="ml-[28px] w-[22px] h-[20px] bg-[#242424] border border-[#111] flex items-center justify-center shrink-0">
          <Svg w={16} h={14}>
            <circle cx="8" cy="6" r="3.500" fill="none" stroke="#ccc" />
            <path d="M11 9l4 4M2 1v12M0 3l2-2 2 2M0 11l2 2 2-2" stroke="#ccc" fill="none" />
          </Svg>
        </div>
        <Svg w={17} h={11} cls="ml-[5px] shrink-0">
          <rect x=".5" y=".5" width="16" height="10" fill="none" stroke="#5d5d5d" />
          <path d="M2 3h4l4 5h5" stroke="#5d5d5d" fill="none" />
        </Svg>
        <Svg w={17} h={11} cls="ml-[8px] shrink-0">
          <rect x=".5" y=".5" width="16" height="10" fill="none" stroke="#aaa" />
          <path d="M2 3c4 0 5 3 8 3s4-2 5-2M2 7c4 0 5 3 8 2s4-2 5-2" stroke="#aaa" fill="none" />
        </Svg>
        <Svg w={21} h={16} cls="ml-[31px] shrink-0">
          <path d="M0 4h7M14 4h7M0 12h7M14 12h7M4 1l6 6M10 1L4 7M8 9l6 6M14 9l-6 6" stroke="#5f5f5f" fill="none" />
        </Svg>
        <Svg w={11} h={11} cls="ml-[33px] shrink-0">
          <path d="M5.500 0l5.500 5.500-5.500 5.500L0 5.500z" fill="#5f5f5f" />
        </Svg>
        <Svg w={17} h={13} cls="ml-[11px] shrink-0">
          <path d="M1 8h4v4H1zM11 1h4v4h-4zM5 10h3V3h3" stroke="#5f5f5f" fill="none" />
        </Svg>
        <Svg w={12} h={13} cls="ml-[7px] shrink-0">
          <path d="M1 8h4v4H1zM5 10h3V2h4" stroke="#5f5f5f" fill="none" />
        </Svg>
      </div>
      <div className="h-[17px] shrink-0 flex items-center bg-[#3a3a3a] border-t border-[#232323]">
        <Svg w={9} h={6} cls="ml-[6px] shrink-0">
          <path d="M0 6l3-4 1.500 2L6 1l3 5z" fill="#bbb" />
        </Svg>
        <div className="ml-[16px] w-[46px] h-[3px] bg-[#222] border border-[#111] relative shrink-0">
          <div className="absolute right-0 -top-[5px] w-[6px] h-[9px] bg-[#555]" />
        </div>
        <Svg w={17} h={7} cls="ml-[9px] shrink-0">
          <path d="M0 7l5-6 3 3 3-4 6 7z" fill="#ccc" />
        </Svg>
        <div className="ml-[4px] w-px h-[15px] bg-[#222]" />
        <div className="ml-[1px] w-[231px] h-[15px] flex items-center justify-between px-[4px] bg-[#383838] relative shrink-0">
          <Svg w={6} h={9}>
            <path d="M6 0v9L0 4.500z" fill="#999" />
          </Svg>
          <div className="w-[16px] h-[15px] bg-[#484848] border border-[#222] absolute left-[59px] top-0" />
          <Svg w={6} h={9}>
            <path d="M0 0v9l6-4.500z" fill="#aaa" />
          </Svg>
        </div>
      </div>
    </div>
  );
}

function Timeline() {
  return (
    <div className="w-[1149px] shrink-0 ml-[1px] flex flex-col">
      <div className="h-[19px] shrink-0 flex items-stretch text-[11px] bg-[#262626]">
        <div className="w-[85px] bg-[#3e3e3e] border border-b-0 border-[#9c8646] flex items-center pl-[2px] -mb-px z-10">
          <Grip />
          <div className="w-[10px] h-[10px] ml-[5px] bg-[#b5a77f]" />
          <span className="ml-[4px] text-[#a8a8a8] whitespace-nowrap">Final Cut</span>
          <Close cls="ml-[5px] text-[10px] text-[#bbb]" />
        </div>
        <div className="w-[87px] bg-[#2f2f2f] border-r border-[#181818] text-[#666] pl-[12px] leading-[18px]">Renderliste</div>
        <div className="flex-1 flex items-center justify-end pr-[1px] gap-[11px]">
          <MenuIcon />
          <Grip />
        </div>
      </div>
      <div className="flex-1 flex border border-[#9c8646] bg-[#3a3a3a] min-h-0">
        <TimelineLeft />
        <GraphEditor />
        <div className="flex-1 flex flex-col items-center bg-[#3a3a3a] pt-[38px] border-l border-[#222]">
          <Svg w={12} h={13}>
            <path d="M0 0h12v8l-6 5L0 8z" fill="#8a8a8a" />
          </Svg>
          <Svg w={13} h={12} cls="mt-[8px]">
            <circle cx="5" cy="5" r="4" fill="none" stroke="#aaa" />
            <path d="M5 5l-3 6h6zM9 5h3.500v5H9" stroke="#aaa" fill="none" />
          </Svg>
        </div>
      </div>
    </div>
  );
}

function AbsatzPanel() {
  const Lines = ({ a, hi }: { a: "l" | "c" | "r" | "j"; hi?: boolean }) => (
    <Svg w={15} h={13}>
      {[0, 2, 4, 6, 8, 10, 12].map((y, i) => {
        const w = a === "j" || i % 2 === 0 ? 15 : 10;
        const x = a === "l" ? 0 : a === "c" ? (15 - w) / 2 : 15 - w;
        return <rect key={y} x={x} y={y} width={w} height="1" fill={hi ? "#ddd" : "#c4c4c4"} />;
      })}
    </Svg>
  );
  return (
    <div className="w-[109px] shrink-0 ml-[6px] flex flex-col">
      <div className="h-[4px] w-[65px] bg-[#3a3a3a] shrink-0" />
      <div className="h-[19px] mt-[2px] shrink-0 flex items-stretch text-[11px] bg-[#262626]">
        <div className="w-[62px] bg-[#3e3e3e] flex items-center pl-[3px] -mb-px">
          <Grip />
          <span className="ml-[3px] text-[#a8a8a8]">Absatz</span>
          <Close cls="ml-[5px] text-[10px] text-[#bbb]" />
        </div>
        <div className="flex-1 flex items-center justify-end pr-[2px] gap-[10px]">
          <MenuIcon />
          <Grip />
        </div>
      </div>
      <div className="flex-1 bg-[#3e3e3e] border border-[#2a2a2a] text-[11px] overflow-hidden">
        <div className="h-[32px] flex items-center pl-[8px]">
          <Lines a="l" />
          <div className="ml-[7px] w-[20px] h-[20px] bg-[#252525] border border-[#1a1a1a] flex items-center justify-center">
            <Lines a="c" hi />
          </div>
          <div className="ml-[8px]"><Lines a="r" /></div>
          <div className="ml-[15px]"><Lines a="j" /></div>
        </div>
        <div className="h-px bg-[#2a2a2a] ml-[6px]" />
        <div className="grid grid-cols-[71px_40px] mt-[3px]">
          {[0, 1].map((i) => (
            <React.Fragment key={i}>
              <div className="h-[17px] flex items-center pl-[6px]">
                <Svg w={18} h={10}>
                  <path d="M0 5h4M3 3l2 2-2 2" stroke="#ccc" fill="none" />
                  <path d="M8 .5h10M8 2.500h5M8 4.500h10M8 6.500h5M8 8.500h10" stroke="#c0c0c0" />
                </Svg>
                <span className="ml-[4px]"><Gold>0</Gold></span>
                <span className="ml-[4px] text-[#999]">Px</span>
              </div>
              <div className="h-[17px] flex items-center">
                <Svg w={19} h={11}>
                  <path d="M0 2h5M4 0l2 2-2 2" stroke="#ccc" fill="none" />
                  <path d="M7 .5h11M7 2.500h11M7 4.500h11M7 6.500h11M7 8.500h11M7 10.500h11" stroke="#aaa" />
                </Svg>
                <span className="ml-[6px]"><Gold>0</Gold></span>
              </div>
            </React.Fragment>
          ))}
        </div>
      </div>
    </div>
  );
}

function Watermark() {
  return (
    <div className="absolute left-[60px] top-[620px] w-[240px] h-[66px] opacity-75 pointer-events-none">
      <svg width="80" height="66" viewBox="0 0 80 66" className="absolute left-0 top-0">
        <ellipse cx="26" cy="24" rx="27" ry="10" transform="rotate(42 26 24)" fill="none" stroke="#a2a2a2" strokeWidth="4" />
        <ellipse cx="48" cy="36" rx="27" ry="10" transform="rotate(-48 48 36)" fill="none" stroke="#a2a2a2" strokeWidth="4" />
        <path d="M15 36C6 46 8 58 20 58S34 52 36 50" stroke="#a2a2a2" strokeWidth="4" fill="none" />
      </svg>
      <span className="absolute left-[60px] top-[42px] font-['Liberation_Sans',sans-serif] font-bold text-[20.5px] leading-none tracking-[0.5px] text-[#a4a4a4] whitespace-nowrap">PSD-Tutorials.de</span>
    </div>
  );
}

function Cursor() {
  return (
    <svg width="13" height="19" viewBox="0 0 13 19" className="absolute left-[912px] top-[651px]">
      <path d="M1 1v14l3.500-3.300 2.500 6 2.500-1-2.500-5.700H12z" fill="#fff" stroke="#111" strokeWidth=".8" />
    </svg>
  );
}

export default function App() {
  return (
    <div className={`w-[1280px] h-[720px] relative overflow-hidden bg-white flex flex-col ${fs}`}>
      <TitleBar />
      <MenuBar />
      <div className="h-[662px] shrink-0 ml-[8px] mr-[7px] bg-[#1b1b1b] flex flex-col">
        <ToolBar />
        <TopRow />
        <div className="h-[210px] shrink-0 mt-[6px] flex">
          <Timeline />
          <AbsatzPanel />
        </div>
      </div>
      <Watermark />
      <Cursor />
    </div>
  );
}
